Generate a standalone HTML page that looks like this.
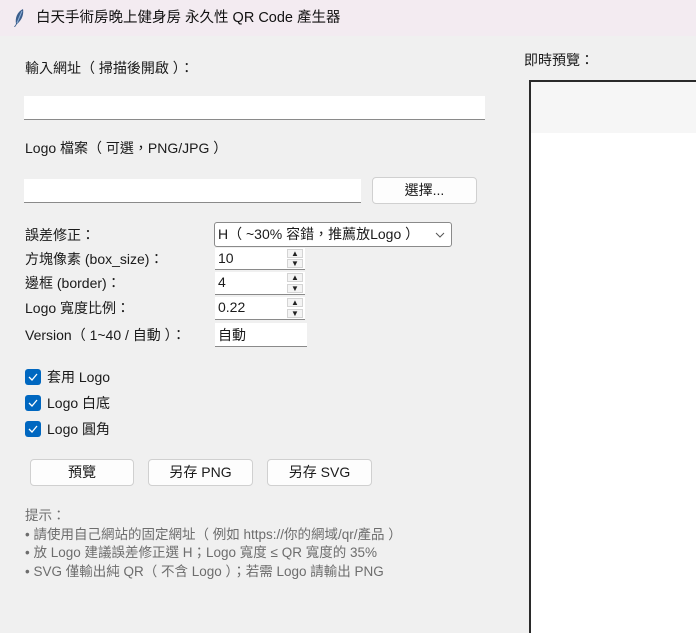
<!DOCTYPE html>
<html><head><meta charset="utf-8"><style>
*{box-sizing:border-box;margin:0;padding:0}
html,body{width:696px;height:633px;overflow:hidden}
body{background:#f0f0f0;font-family:"Liberation Sans","Noto Sans CJK TC",sans-serif;font-size:14px;color:#1a1a1a;position:relative}
.a{position:absolute;white-space:nowrap;line-height:18px}
.tb{position:absolute;left:0;top:0;width:696px;height:36px;background:#f3ebf1}
.in{position:absolute;background:#fff;border-bottom:1px solid #8a8a8a}
.btn{position:absolute;background:#fdfdfd;border:1px solid #d0d0d0;border-radius:4px;text-align:center;line-height:25px;font-size:14px}
.sp{position:absolute;background:#fff;border-bottom:1px solid #8a8a8a;padding-left:3px;line-height:21px;font-size:14px}
.sp i{position:absolute;left:72px;width:16px;height:9px;background:#f4f4f4;border:1px solid #d4d4d4;font-style:normal;font-size:8px;line-height:8px;text-align:center;color:#222}
.cb{position:absolute;left:25px;width:16px;height:16px;background:#0067c0;border-radius:3px}
.cb svg{position:absolute;left:3px;top:4px}
.h{color:#6d6d6d;font-size:13.5px}
</style></head><body>
<div class="tb"></div>
<svg style="position:absolute;left:13px;top:8px" width="12" height="20" viewBox="0 0 12 20"><path d="M10 1 C4 4 2 10 3 16 L1 19 L2 19 L4 16 C9 12 11 6 10 1Z" fill="#3b5e8c"/><path d="M9 3 L4 15" stroke="#8fb0d8" stroke-width="1"/></svg>
<div class="a" style="left:36px;top:9px;font-size:14.5px;color:#111">白天手術房晚上健身房 永久性 QR Code 產生器</div>

<div class="a" style="left:25px;top:59px">輸入網址（ 掃描後開啟 ）：</div>
<div class="in" style="left:24px;top:96px;width:461px;height:24px"></div>

<div class="a" style="left:25px;top:139px">Logo 檔案（ 可選，PNG/JPG ）</div>
<div class="in" style="left:24px;top:179px;width:337px;height:24px"></div>
<div class="btn" style="left:372px;top:177px;width:105px;height:27px">選擇...</div>

<div class="a" style="left:25px;top:226px">誤差修正：</div>
<div style="position:absolute;left:214px;top:222px;width:238px;height:25px;background:#fff;border:1px solid #8a8a8a;border-radius:3px;padding-left:3px;line-height:23px;white-space:nowrap">H（ ~30% 容錯，推薦放Logo ）<svg style="position:absolute;right:6px;top:9px" width="10" height="6"><path d="M1 1 L5 5 L9 1" stroke="#555" fill="none"/></svg></div>

<div class="a" style="left:25px;top:250px">方塊像素 (box_size)：</div>
<div class="sp" style="left:215px;top:248px;width:90px;height:22px">10<i style="top:1px">▲</i><i style="top:11px">▼</i></div>
<div class="a" style="left:25px;top:274px">邊框 (border)：</div>
<div class="sp" style="left:215px;top:272px;width:90px;height:23px">4<i style="top:1px">▲</i><i style="top:12px">▼</i></div>
<div class="a" style="left:25px;top:299px">Logo 寬度比例：</div>
<div class="sp" style="left:215px;top:297px;width:90px;height:23px">0.22<i style="top:1px">▲</i><i style="top:12px">▼</i></div>
<div class="a" style="left:25px;top:326px">Version（ 1~40 / 自動 ）：</div>
<div class="sp" style="left:215px;top:323px;width:92px;height:24px;line-height:24px">自動</div>

<div class="cb" style="top:369px"><svg width="10" height="8"><path d="M1 4 L4 7 L9 1" stroke="#fff" stroke-width="1.3" fill="none"/></svg></div>
<div class="a" style="left:47px;top:368px">套用 Logo</div>
<div class="cb" style="top:395px"><svg width="10" height="8"><path d="M1 4 L4 7 L9 1" stroke="#fff" stroke-width="1.3" fill="none"/></svg></div>
<div class="a" style="left:47px;top:394px">Logo 白底</div>
<div class="cb" style="top:421px"><svg width="10" height="8"><path d="M1 4 L4 7 L9 1" stroke="#fff" stroke-width="1.3" fill="none"/></svg></div>
<div class="a" style="left:47px;top:420px">Logo 圓角</div>

<div class="btn" style="left:30px;top:459px;width:104px;height:27px">預覽</div>
<div class="btn" style="left:148px;top:459px;width:105px;height:27px">另存 PNG</div>
<div class="btn" style="left:267px;top:459px;width:105px;height:27px">另存 SVG</div>

<div class="a h" style="left:25px;top:507px">提示：</div>
<div class="a h" style="left:25px;top:526px">• 請使用自己網站的固定網址（ 例如 https://你的網域/qr/產品 ）</div>
<div class="a h" style="left:25px;top:544px">• 放 Logo 建議誤差修正選 H；Logo 寬度 ≤ QR 寬度的 35%</div>
<div class="a h" style="left:25px;top:563px">• SVG 僅輸出純 QR（ 不含 Logo ）；若需 Logo 請輸出 PNG</div>

<div class="a" style="left:524px;top:51px">即時預覽：</div>
<div style="position:absolute;left:529px;top:80px;width:170px;height:556px;border:2px solid #2a2a2a;background:#fff">
<div style="height:51px;background:#f6f6f6"></div></div>
</body></html>
